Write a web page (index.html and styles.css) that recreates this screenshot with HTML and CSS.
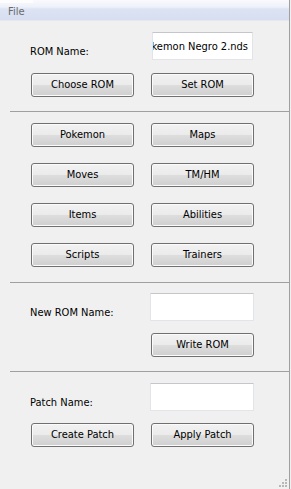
FILE: index.html
```html
<!DOCTYPE html>
<html>
<head>
<meta charset="utf-8">
<link rel="stylesheet" href="styles.css">
</head>
<body>
<div class="window">
  <div class="menubar"><span class="tab-mark"></span><span class="menu-item">File</span></div>

  <section class="sec sec-rom">
    <div class="row">
      <span class="label">ROM Name:</span>
      <div class="field field-first"><span>Pokemon Negro 2.nds</span></div>
    </div>
    <div class="row row-btns">
      <button class="btn">Choose ROM</button>
      <button class="btn">Set ROM</button>
    </div>
  </section>

  <hr class="sep">

  <section class="sec sec-tools">
    <button class="btn">Pokemon</button>
    <button class="btn">Maps</button>
    <button class="btn">Moves</button>
    <button class="btn">TM/HM</button>
    <button class="btn">Items</button>
    <button class="btn">Abilities</button>
    <button class="btn">Scripts</button>
    <button class="btn">Trainers</button>
  </section>

  <hr class="sep sep-2">

  <section class="sec sec-write">
    <div class="row">
      <span class="label">New ROM Name:</span>
      <div class="field"></div>
    </div>
    <div class="row row-btns">
      <span></span>
      <button class="btn">Write ROM</button>
    </div>
  </section>

  <hr class="sep sep-3">

  <section class="sec sec-patch">
    <div class="row">
      <span class="label">Patch Name:</span>
      <div class="field"></div>
    </div>
    <div class="row row-btns">
      <button class="btn">Create Patch</button>
      <button class="btn">Apply Patch</button>
    </div>
  </section>

  <svg class="grip" width="10" height="10" viewBox="0 0 10 10">
    <g fill="#b8b8b8">
      <rect x="7" y="1" width="2" height="2"/>
      <rect x="4" y="4" width="2" height="2"/><rect x="7" y="4" width="2" height="2"/>
      <rect x="1" y="7" width="2" height="2"/><rect x="4" y="7" width="2" height="2"/><rect x="7" y="7" width="2" height="2"/>
    </g>
  </svg>
</div>
</body>
</html>
```

FILE: styles.css
```css
* { box-sizing: border-box; }
html, body { margin: 0; padding: 0; }
body {
  background: #f0f0f0;
  font-family: "DejaVu Sans Condensed", "DejaVu Sans", sans-serif;
  font-size: 11px;
  color: #000;
}
.window {
  position: relative;
  width: 290px;
  height: 489px;
  border-right: 1px solid #a0a0a0;
  overflow: hidden;
}
.menubar {
  position: relative;
  height: 21px;
  background: linear-gradient(to bottom, #f9fafd 0%, #eef1f9 35%, #dce3f3 45%, #d6def1 100%);
  border-bottom: 1px solid #e6e8ee;
  display: flex;
  align-items: center;
}
.tab-mark {
  position: absolute;
  left: 0; top: 0;
  width: 33px; height: 3px;
  background: #fdfdfd;
}
.menu-item {
  margin-left: 8px;
  margin-top: 2px;
  color: #6a6a6a;
  font-size: 11px;
}
.sec { margin-left: 31px; }
.row {
  display: grid;
  grid-template-columns: 103px 103px;
  column-gap: 17px;
}
.label {
  align-self: end;
  margin-left: -1px;
  margin-bottom: 2px;
  line-height: 13px;
  white-space: nowrap;
}
.field {
  height: 28px;
  background: #fff;
  border: 1px solid #e2e4e9;
  border-top-color: #c4c6cb;
  border-radius: 1px;
  overflow: hidden;
  white-space: nowrap;
  display: flex;
  justify-content: flex-end;
  align-items: center;
  padding-right: 4px;
  margin-left: -1px;
}
.field-first { margin-left: 1px; width: 101px; }
.btn {
  display: block;
  width: 103px;
  height: 24px;
  padding: 0 0 1px;
  font-family: inherit;
  font-size: 11px;
  color: #000;
  border: 1px solid #707070;
  border-radius: 3px;
  background: linear-gradient(to bottom, #f2f2f2 0%, #ebebeb 48%, #dddddd 52%, #cfcfcf 100%);
  box-shadow: inset 0 0 0 1px #fbfbfb;
}
.sec-rom { padding-top: 11px; }
.sec-rom .row-btns { margin-top: 13px; }
.sep {
  margin: 14px 0 0 10px;
  border: 0;
  height: 1px;
  background: #a0a0a0;
}
.sec-tools {
  padding-top: 11px;
  display: grid;
  grid-template-columns: 103px 103px;
  column-gap: 17px;
  row-gap: 16px;
}
.sep-2 { margin-top: 15px; }
.sec-write { padding-top: 10px; }
.sec-write .row-btns { margin-top: 12px; }
.sep-3 { margin-top: 14px; }
.sec-patch { padding-top: 11px; }
.sec-patch .row-btns { margin-top: 12px; }
.grip {
  position: absolute;
  right: 1px;
  bottom: 1px;
}
```
